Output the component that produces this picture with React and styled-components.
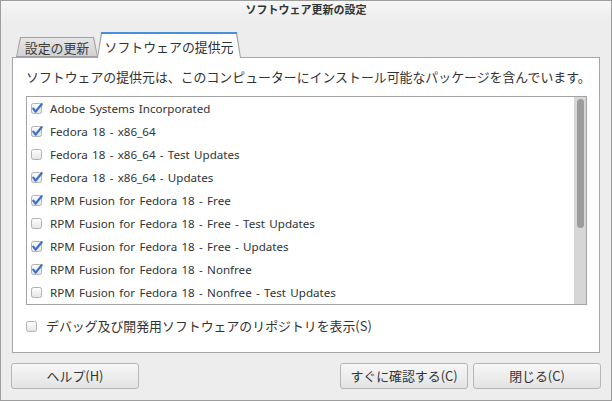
import styled, { createGlobalStyle } from "styled-components";

const GlobalStyle = createGlobalStyle`
    html, body {
        margin: 0;
        padding: 0;
        background: #ededed;
    }
    * {
        box-sizing: border-box;
    }
`;

const sources = [
    { name: "Adobe Systems Incorporated", on: true },
    { name: "Fedora 18 - x86_64", on: true },
    { name: "Fedora 18 - x86_64 - Test Updates", on: false },
    { name: "Fedora 18 - x86_64 - Updates", on: true },
    { name: "RPM Fusion for Fedora 18 - Free", on: true },
    { name: "RPM Fusion for Fedora 18 - Free - Test Updates", on: false },
    { name: "RPM Fusion for Fedora 18 - Free - Updates", on: true },
    { name: "RPM Fusion for Fedora 18 - Nonfree", on: true },
    { name: "RPM Fusion for Fedora 18 - Nonfree - Test Updates", on: false },
];

const CheckBox = ({ checked }) => (
    <SCheck viewBox="0 0 13 13" width="13" height="13">
        <defs>
            <linearGradient id="cbg" x1="0" y1="0" x2="0" y2="1">
                <stop offset="0" stopColor="#ffffff" />
                <stop offset="1" stopColor="#e4e4e4" />
            </linearGradient>
        </defs>
        <rect x="1.5" y="1.5" width="10" height="10" rx="2" fill="url(#cbg)" stroke="#b2b2b2" />
        {checked && (
            <path
                d="M3.3 6.6 L5.6 9.6 L11.6 2.2"
                fill="none"
                stroke="#3d72c6"
                strokeWidth="2.3"
                strokeLinecap="round"
                strokeLinejoin="round"
            />
        )}
    </SCheck>
);

export default function App() {
    return (
        <>
            <GlobalStyle />
            <SWindow>
                <STitleBar>ソフトウェア更新の設定</STitleBar>
                <SBody>
                    <STabRow>
                        <STab>設定の更新</STab>
                        <STab $active>ソフトウェアの提供元</STab>
                    </STabRow>
                    <SPanel>
                        <SDesc>ソフトウェアの提供元は、このコンピューターにインストール可能なパッケージを含んでいます。</SDesc>
                        <SList>
                            <SRows>
                                {sources.map((s) => (
                                    <SRow key={s.name}>
                                        <CheckBox checked={s.on} />
                                        <SRowLabel>{s.name}</SRowLabel>
                                    </SRow>
                                ))}
                            </SRows>
                            <STrack>
                                <SThumb />
                            </STrack>
                        </SList>
                        <SDebugRow>
                            <CheckBox checked={false} />
                            <SDebugLabel>デバッグ及び開発用ソフトウェアのリポジトリを表示(S)</SDebugLabel>
                        </SDebugRow>
                    </SPanel>
                </SBody>
                <SButtonRow>
                    <SButton>ヘルプ(H)</SButton>
                    <SSpacer />
                    <SButton>すぐに確認する(C)</SButton>
                    <SButton>閉じる(C)</SButton>
                </SButtonRow>
            </SWindow>
        </>
    );
}

const SWindow = styled.div`
    width: 612px;
    height: 401px;
    border: 1px solid #9d9d9d;
    background: #ededed;
    display: flex;
    flex-direction: column;
    font-family: "Noto Sans", "Noto Sans CJK JP", sans-serif;
    color: #2e3436;
    overflow: hidden;
`;

const STitleBar = styled.div`
    height: 19px;
    line-height: 17px;
    text-align: center;
    font-family: "Noto Sans CJK JP", sans-serif;
    font-size: 11px;
    font-weight: 700;
    background: linear-gradient(#f6f6f6, #ededed);
`;

const SBody = styled.div`
    padding: 12px 11px 0 11px;
    display: flex;
    flex-direction: column;
`;

const STabRow = styled.div`
    display: flex;
    align-items: flex-end;
    height: 25px;
    padding-left: 4px;
    position: relative;
    z-index: 2;
`;

const STab = styled.div`
    position: relative;
    height: ${(p) => (p.$active ? 26 : 20)}px;
    width: ${(p) => (p.$active ? 144 : 82)}px;
    margin-left: ${(p) => (p.$active ? -1 : 0)}px;
    margin-bottom: ${(p) => (p.$active ? -1 : 0)}px;
    padding-top: ${(p) => (p.$active ? 3 : 1)}px;
    display: flex;
    align-items: center;
    justify-content: center;
    font-family: "Noto Sans CJK JP", sans-serif;
    font-size: 12.9px;
    line-height: 16px;
    color: ${(p) => (p.$active ? "#2e3436" : "#3a3a3a")};
    z-index: ${(p) => (p.$active ? 2 : 1)};
    &::before,
    &::after {
        content: "";
        position: absolute;
        z-index: -1;
        clip-path: polygon(4px 0, calc(100% - 4px) 0, 100% 100%, 0 100%);
    }
    &::before {
        inset: 0;
        background: ${(p) =>
            p.$active
                ? "linear-gradient(#4a90d9 0 2px, #a2a2a2 2px)"
                : "#a0a0a0"};
    }
    &::after {
        top: ${(p) => (p.$active ? 2 : 1)}px;
        left: 1px;
        right: 1px;
        bottom: ${(p) => (p.$active ? 0 : 1)}px;
        background: ${(p) =>
            p.$active ? "#ffffff" : "linear-gradient(#e6e6e6, #d2d2d2)"};
    }
`;

const SPanel = styled.div`
    height: 296px;
    background: #ffffff;
    border: 1px solid #a6a6a6;
    padding: 11px 12px 0 13px;
    display: flex;
    flex-direction: column;
`;

const SDesc = styled.div`
    height: 16px;
    line-height: 16px;
    font-family: "Noto Sans CJK JP", sans-serif;
    font-size: 12.9px;
    white-space: nowrap;
    color: #333;
`;

const SList = styled.div`
    margin-top: 11px;
    height: 209px;
    flex: none;
    border: 1px solid #a3a3a3;
    display: flex;
    overflow: hidden;
`;

const SRows = styled.div`
    flex: 1;
    overflow: hidden;
`;

const SRow = styled.div`
    height: 23px;
    display: flex;
    align-items: center;
    padding-left: 3px;
    gap: 7px;
`;

const SCheck = styled.svg`
    flex: none;
    display: block;
`;

const SRowLabel = styled.span`
    font-family: "Noto Sans", sans-serif;
    font-size: 11.6px;
    line-height: 16px;
    word-spacing: 1.3px;
    color: #2e3436;
    white-space: nowrap;
`;

const STrack = styled.div`
    width: 12px;
    flex: none;
    background: #d6d6d6;
    padding: 2px 2px 0 3px;
`;

const SThumb = styled.div`
    height: 129px;
    border-radius: 4px;
    background: #9c9c9c;
`;

const SDebugRow = styled.div`
    margin-top: 13px;
    height: 16px;
    flex: none;
    display: flex;
    align-items: center;
    gap: 8px;
    margin-left: -1px;
`;

const SDebugLabel = styled.span`
    font-family: "Noto Sans CJK JP", sans-serif;
    font-size: 12.9px;
    line-height: 16px;
    color: #333;
    white-space: nowrap;
`;

const SButtonRow = styled.div`
    display: flex;
    gap: 5px;
    padding: 10px 10px 0 10px;
`;

const SSpacer = styled.div`
    flex: 1;
`;

const SButton = styled.button`
    width: 128px;
    height: 26px;
    border: 1px solid #b6b6b6;
    border-radius: 3px;
    background: linear-gradient(#f7f7f7, #e3e3e3);
    font-family: "Noto Sans CJK JP", sans-serif;
    font-size: 12.9px;
    line-height: 16px;
    color: #333;
    padding: 0;
    display: flex;
    align-items: center;
    justify-content: center;
`;
